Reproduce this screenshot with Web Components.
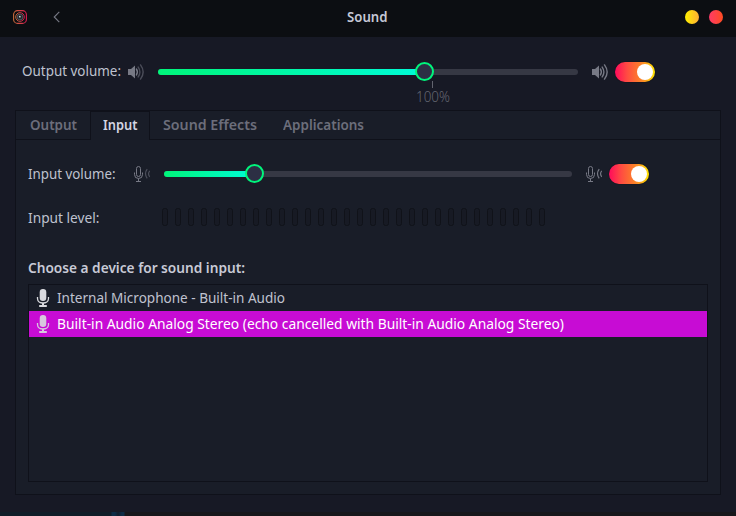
<!DOCTYPE html>
<html lang="en"><head><meta charset="utf-8"><title>Sound</title>
<style>body{margin:0;background:#171925;overflow:hidden}</style></head><body>
<sound-window></sound-window>
<script>
const define=(name,html,setup)=>customElements.define(name,class extends HTMLElement{
  constructor(){super();this.attachShadow({mode:'open'}).innerHTML=html}
  connectedCallback(){if(setup)setup(this,this.shadowRoot)}
});

/* One line of text condensed to the width of its "fit" attribute */
define('fit-text',`<style>:host{display:block;height:20px;line-height:20px;white-space:nowrap;flex:none}
span{display:inline-block;transform-origin:0 50%}</style><span><slot></slot></span>`,(h,r)=>{
  const w=+h.getAttribute('fit'),s=r.querySelector('span');
  h.style.width=w+'px';
  s.style.transform=`scaleX(${w/s.getBoundingClientRect().width})`;
});

define('range-slider',`<style>:host{display:block;position:relative;height:19px;flex:none}
.track{position:absolute;left:0;right:0;top:7px;height:6px;border-radius:3px;background:#363844}
.fill{height:6px;border-radius:3px 0 0 3px;background:linear-gradient(90deg,#00f57a,#00fbd8)}
.knob{position:absolute;top:0;box-sizing:border-box;width:19px;height:19px;border:2px solid #00f57c;border-radius:50%;background:#2c2f44}
</style><div class="track"><div class="fill"></div></div><div class="knob"></div><slot></slot>`,(h,r)=>{
  const v=+h.getAttribute('value');h.style.width=h.getAttribute('length')+'px';
  r.querySelector('.fill').style.width=v+'px';r.querySelector('.knob').style.left=v-9.5+'px';
});

define('toggle-switch',`<style>:host{display:flex;box-sizing:border-box;width:40px;height:20px;padding:2px;justify-content:flex-end;border-radius:10px;background:linear-gradient(90deg,#ff0a5c,#ff4b42 30%,#fb8b24 70%,#ffe600);box-shadow:0 0 1px #08090d;flex:none}
i{width:16px;height:16px;border-radius:50%;background:#fff}</style><i></i>`);

define('speaker-icon',`<style>:host{display:block;width:16px;height:16px;color:#777985;flex:none}svg{display:block}
:host([low]) .far{opacity:.55}</style>
<svg width="16" height="16" fill="none" stroke="currentColor" stroke-width="1.4" stroke-linecap="round"><path d="M0 5h3l4-3.6v13.2L3 11H0z" fill="currentColor" stroke="none"/><path d="M8.4 5Q10.4 8 8.4 11"/><path class="far" d="M10.2 3.1Q13.6 8 10.2 12.9M12.5 .9Q17.8 8 12.5 15.1"/></svg>`);

define('mic-level-icon',`<style>:host{display:block;width:16px;height:16px;color:#777985;flex:none}svg{display:block}
:host([low]) .far{opacity:.55}</style>
<svg width="16" height="16" fill="none" stroke="currentColor"><rect x="2.5" y=".5" width="4" height="10" rx="2"/><path d="M.5 6.5v2a4 4 0 0 0 8 0v-2M4.5 12.5v3M2 15.5h5"/><path class="far" d="M13.2 3.2Q9.8 7.7 13.2 12.3M15.8 4.8Q13.3 7.7 15.8 10.8" stroke-width="1.2"/></svg>`);

define('mic-icon',`<style>:host{display:block;width:14px;height:18px;color:#d9dadf;flex:none}svg{display:block}</style>
<svg width="14" height="18" fill="none" stroke="currentColor"><rect x="3.7" y="0" width="6.6" height="12" rx="3.2" fill="currentColor" stroke="none"/><path d="M1.5 8v1.5c0 6 11 6 11 0V8" stroke-width="1.3"/><path d="M7 14v3M3.2 17h7.6" stroke-width="2"/></svg>`);

define('window-header',`<style>:host{display:flex;box-sizing:border-box;height:37px;padding:0 13px;background:#0c0e12;color:#c5c8d6;font-weight:600}
.side{width:334.4px;display:flex;align-items:center;height:34px}.right{justify-content:flex-end;width:335.1px;gap:10px}
.app{margin-right:26px}i{width:14px;height:14px;border-radius:50%}fit-text{margin-top:6px}
.min{background:linear-gradient(90deg,#fff000,#ffaf35)}.close{background:linear-gradient(90deg,#ff3a68,#ff4c20)}</style>
<div class="side"><svg class="app" width="14" height="14" fill="none"><defs><linearGradient id="g"><stop stop-color="#c66a3a"/><stop offset="1" stop-color="#d91d50"/></linearGradient></defs>
<rect x=".6" y=".6" width="12.8" height="12.8" rx="4" stroke="url(#g)" stroke-width="1.1"/><circle cx="7" cy="7" r="4.3" stroke="url(#g)" stroke-width="1"/><circle cx="7" cy="7" r="2.9" fill="#20282d" stroke="#53535b"/><circle cx="6.8" cy="6.7" r=".9" fill="#d0d6d9"/></svg>
<svg width="8" height="12" fill="none" stroke="#777985" stroke-width="1.1"><path d="M6.3 .8 1.2 6l5.1 5.2"/></svg></div>
<fit-text fit="40.5"><slot></slot></fit-text><div class="side right"><i class="min"></i><i class="close"></i></div>`);

define('tab-bar',`<style>:host{display:flex;height:29px;box-sizing:border-box;color:#6c6e7b;font-weight:600}
div{box-sizing:border-box;height:29px;border-bottom:1px solid #0f111a;padding-top:3px;flex:none}
.on{border:1px solid #0f111a;border-bottom:0;padding:2px 12px 0;color:#d3d5e2;width:60px}
</style><div style="width:74px;padding-left:14px"><fit-text fit="47">Output</fit-text></div>
<div class="on"><fit-text fit="34.5">Input</fit-text></div>
<div style="width:120px;padding-left:13px"><fit-text fit="94">Sound Effects</fit-text></div>
<div style="flex:1;padding-left:13px"><fit-text fit="81">Applications</fit-text></div>`);

define('level-meter',`<style>:host{display:flex;gap:7px;height:18px}i{box-sizing:border-box;width:6px;height:18px;border:1px solid #101219;border-radius:2.5px;background:#171a24}</style>`,(h,r)=>{
  for(let n=0;n<30;n++)r.append(document.createElement('i'));
});

define('device-row',`<style>:host{display:flex;height:26px;box-sizing:border-box;padding:4px 7px;gap:7px;color:#c0c3d0}
:host([selected]){background:#c70cd4;color:#fff}:host([selected]) mic-icon{opacity:.92}::slotted(fit-text){margin-top:-2px}</style><mic-icon></mic-icon><slot></slot>`);

define('sound-window',`<style>:host{display:flex;flex-direction:column;width:736px;height:516px;background:#171925;color:#bfc2cf;font:15px/20px "Noto Sans",sans-serif}
.master{display:flex;height:50px;padding:23px 0 0 22px}
.master speaker-icon{margin-top:4px}.mark{position:absolute;left:257.5px;top:19px;width:34px;color:#646671;font-weight:350}
.mark::before{content:"";display:block;width:1px;height:7px;margin:0 0 -2px 16.5px;background:#62646f}
.panel{box-sizing:border-box;width:706px;height:385px;margin-left:15px;border:1px solid #0f111a;background:#191d28}
.row{display:flex;padding-left:12px}.vol{height:45px;padding-top:23px;box-sizing:border-box}
.list{box-sizing:border-box;width:680px;height:198px;margin:7px 0 0 12px;border:1px solid #0f111a}
.head{font-weight:600;color:#c8cad6}
.desk{height:4px;margin-top:17px;background:linear-gradient(90deg,#101d28 0 111px,#0d2c46 112px 115px,#111d2b 118px,#0d2c46 122px 124px,#17171b 125px)}
</style>
<window-header>Sound</window-header>
<div class="master"><fit-text fit="99">Output volume:</fit-text><speaker-icon low style="margin-left:7px"></speaker-icon>
<range-slider length="420" value="266.5" style="margin:2px 14px 0"><div class="mark"><fit-text fit="34">100%</fit-text></div></range-slider>
<speaker-icon></speaker-icon><toggle-switch style="margin:2px 0 0 7px"></toggle-switch></div>
<div class="panel"><tab-bar></tab-bar>
<div class="row vol"><fit-text fit="87.5">Input volume:</fit-text><mic-level-icon low style="margin:3px 0 0 18.5px"></mic-level-icon>
<range-slider length="408" value="90.5" style="margin:1px 14px 0"></range-slider><mic-level-icon style="margin-top:3px"></mic-level-icon><toggle-switch style="margin:1px 0 0 7px"></toggle-switch></div>
<div class="row" style="margin-top:22px"><fit-text fit="71.5">Input level:</fit-text><level-meter style="margin:1px 0 0 62.5px"></level-meter></div>
<div class="row head" style="margin-top:30px"><fit-text fit="217">Choose a device for sound input:</fit-text></div>
<div class="list"><device-row><fit-text fit="228">Internal Microphone - Built-in Audio</fit-text></device-row>
<device-row selected><fit-text fit="507">Built-in Audio Analog Stereo (echo cancelled with Built-in Audio Analog Stereo)</fit-text></device-row></div>
</div><div class="desk"></div>`);
</script></body></html>
